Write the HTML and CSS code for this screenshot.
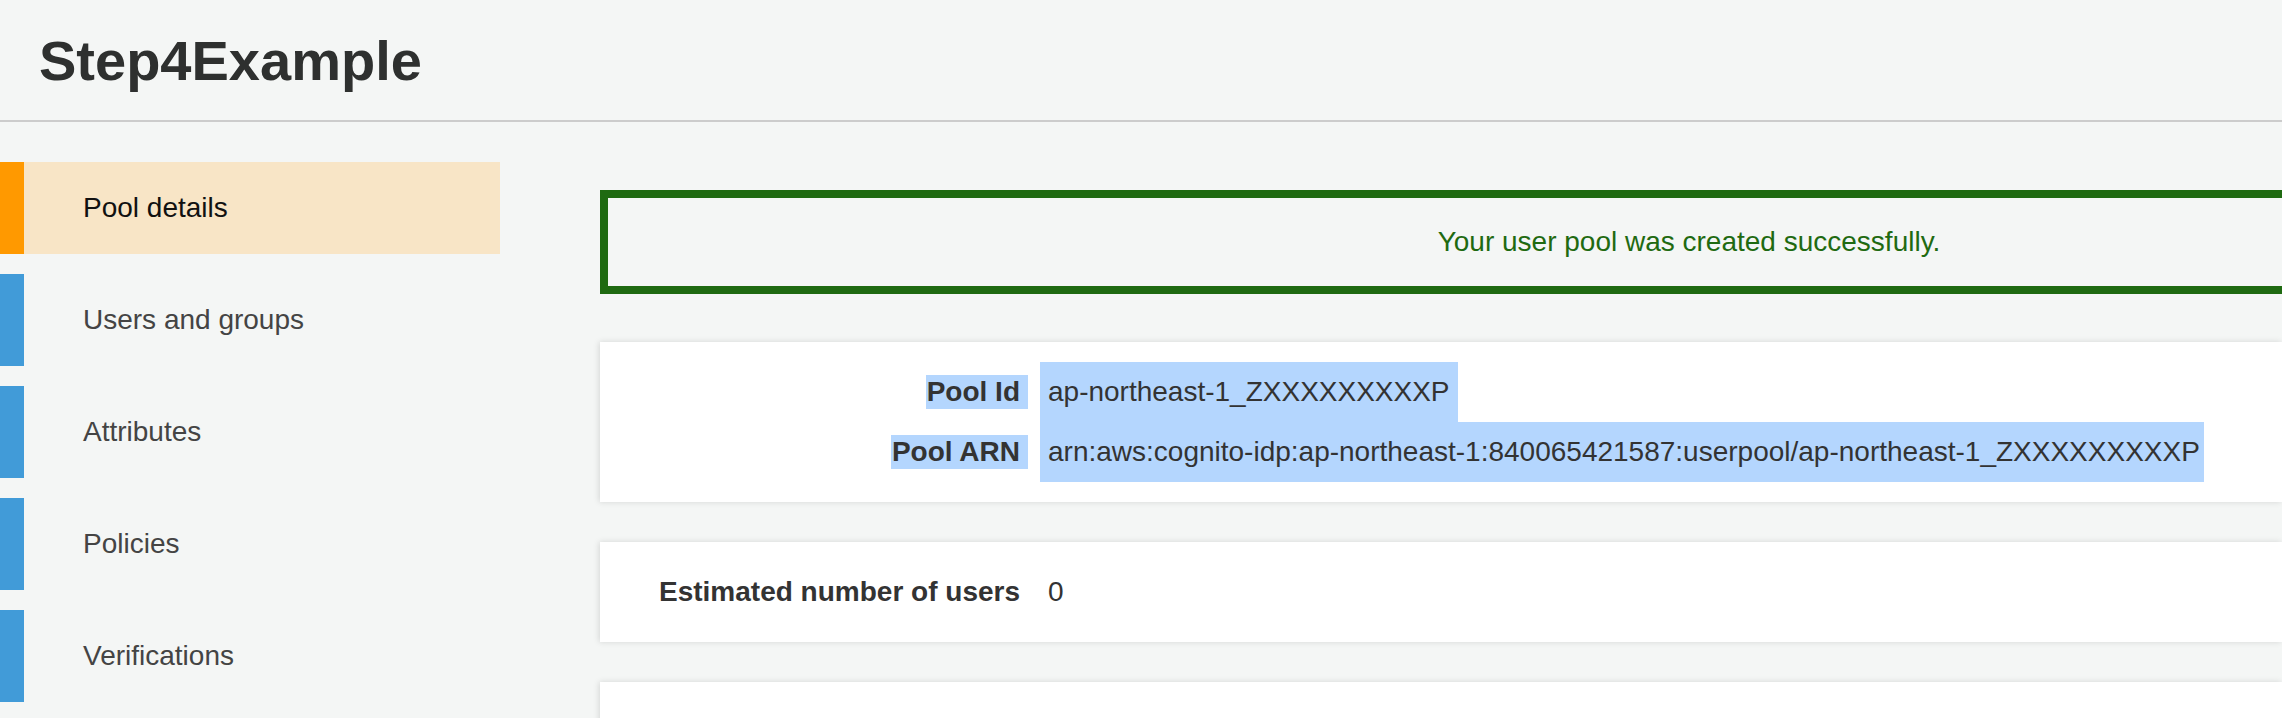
FILE: index.html
```html
<!DOCTYPE html>
<html lang="en">
<head>
<meta charset="utf-8">
<title>Step4Example</title>
<link rel="stylesheet" href="styles.css">
</head>
<body>
<header class="page-header">
  <h1 class="page-title">Step4Example</h1>
</header>
<div class="layout">
  <nav class="sidebar">
    <a class="nav-item nav-item--active">Pool details</a>
    <a class="nav-item">Users and groups</a>
    <a class="nav-item">Attributes</a>
    <a class="nav-item">Policies</a>
    <a class="nav-item">Verifications</a>
  </nav>
  <main class="main">
    <div class="alert-success">Your user pool was created successfully.</div>
    <section class="card card--details">
      <div class="kv-grid">
        <div class="kv-label"><span class="label-text is-selected">Pool Id</span></div>
        <div class="kv-value is-selected">ap-northeast-1_ZXXXXXXXXXP</div>
        <div class="kv-label"><span class="label-text is-selected">Pool ARN</span></div>
        <div class="kv-value kv-value--tight is-selected">arn:aws:cognito-idp:ap-northeast-1:840065421587:userpool/ap-northeast-1_ZXXXXXXXXXP</div>
      </div>
    </section>
    <section class="card card--count">
      <div class="kv-grid">
        <div class="kv-label"><span class="label-text">Estimated number of users</span></div>
        <div class="kv-value">0</div>
      </div>
    </section>
    <section class="card card--more"></section>
  </main>
</div>
</body>
</html>
```

FILE: styles.css
```css
html, body {
  margin: 0;
  padding: 0;
  overflow: hidden;
  background: #f4f6f5;
}

body {
  font-family: "Liberation Sans", Helvetica, Arial, sans-serif;
  color: #333333;
  height: 718px;
}

.page-header {
  height: 120px;
  border-bottom: 2px solid #cccccc;
  display: flex;
  align-items: center;
  padding-left: 39px;
}

.page-title {
  margin: 0;
  font-size: 56px;
  font-weight: bold;
  color: #2e302f;
}

.layout {
  display: flex;
  gap: 100px;
  height: 596px;
  overflow: hidden;
}

.sidebar {
  flex: 0 0 500px;
  padding-top: 40px;
  display: flex;
  flex-direction: column;
  gap: 20px;
}

.nav-item {
  flex: 0 0 92px;
  display: flex;
  align-items: center;
  border-left: 24px solid #419bd8;
  padding-left: 59px;
  font-size: 28px;
  color: #444444;
  text-decoration: none;
}

.nav-item--active {
  border-left-color: #ff9900;
  background: #f8e5c6;
  color: #111111;
}

.main {
  flex: 1 1 auto;
  min-width: 0;
  padding-top: 68px;
  display: flex;
  flex-direction: column;
}

/* the alert continues past the right edge of the window;
   its text sits at the centre of the full (uncropped) box */
.alert-success {
  flex: 0 0 auto;
  height: 88px;
  border: 8px solid #1f6a11;
  border-right: 0;
  padding-left: 488px;
  display: flex;
  align-items: center;
  justify-content: center;
  font-size: 28px;
  color: #1f6a11;
  margin-bottom: 48px;
}

.card {
  flex: 0 0 auto;
  background: #ffffff;
  box-shadow: -1px 0 6px rgba(0, 0, 0, 0.13);
}

.card--details {
  padding: 20px 0;
}

.card--count {
  margin-top: 40px;
  height: 100px;
  display: flex;
  align-items: center;
}

.card--more {
  margin-top: 40px;
  height: 120px;
}

.kv-grid {
  display: grid;
  grid-template-columns: 428px auto;
  column-gap: 12px;
  grid-auto-rows: 60px;
  align-items: center;
  font-size: 28px;
  color: #333333;
  width: 100%;
}

.kv-label {
  text-align: right;
  font-weight: bold;
}

.label-text {
  display: inline-block;
  line-height: 34px;
  padding-right: 8px;
  padding-left: 1px;
}

.kv-value {
  justify-self: start;
  align-self: stretch;
  line-height: 60px;
  padding: 0 8px;
  white-space: nowrap;
}

.kv-value--tight {
  padding-right: 4px;
}

.is-selected {
  background: #b4d6fe;
}
```
